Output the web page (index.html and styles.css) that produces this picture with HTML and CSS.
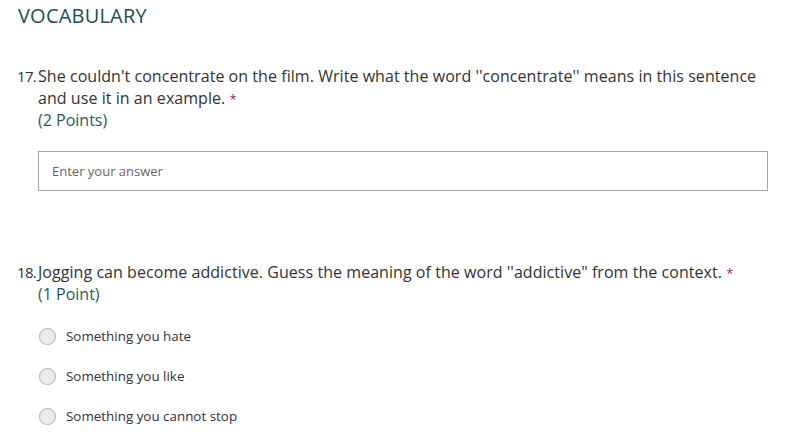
FILE: index.html
```html
<!DOCTYPE html>
<html>
<head>
<meta charset="utf-8">
<link rel="stylesheet" href="styles.css">
</head>
<body>
<div class="page">
  <h1 class="section-title">VOCABULARY</h1>

  <div class="question q17">
    <div class="qnum">17.</div>
    <div class="qbody">
      <div class="qtext">She couldn't concentrate on the film. Write what the word ''concentrate'' means in this sentence and use it in an example. <span class="req">*</span></div>
      <div class="points">(2 Points)</div>
      <div class="answer">Enter your answer</div>
    </div>
  </div>

  <div class="question q18">
    <div class="qnum">18.</div>
    <div class="qbody">
      <div class="qtext">Jogging can become addictive. Guess the meaning of the word ''addictive" from the context. <span class="req">*</span></div>
      <div class="points">(1 Point)</div>
      <div class="options">
        <div class="option"><span class="radio"></span><span class="label">Something you hate</span></div>
        <div class="option"><span class="radio"></span><span class="label">Something you like</span></div>
        <div class="option"><span class="radio"></span><span class="label">Something you cannot stop</span></div>
      </div>
    </div>
  </div>
</div>
</body>
</html>
```

FILE: styles.css
```css
html, body {
  margin: 0;
  padding: 0;
  background: #ffffff;
}
body {
  font-family: "Open Sans", "Noto Sans", "Liberation Sans", sans-serif;
  color: #333333;
}
.page {
  padding: 2px 22px 0 17px;
}
.section-title {
  margin: 0 0 0 1px;
  font-size: 20px;
  font-weight: 400;
  line-height: 28px;
  color: #1f4f4f;
  letter-spacing: 0.2px;
}
.question {
  display: flex;
}
.q17 {
  margin-top: 35px;
}
.q18 {
  margin-top: 70px;
}
.qnum {
  width: 21px;
  flex: none;
  font-size: 15px;
  line-height: 22px;
  letter-spacing: -0.7px;
}
.qbody {
  flex: 1;
}
.qtext {
  font-size: 16px;
  line-height: 22px;
  letter-spacing: 0.05px;
}
.req {
  color: #a4262c;
  font-size: 13px;
  line-height: 13px;
}
.points {
  font-size: 16px;
  line-height: 22px;
  color: #2b5b5b;
}
.answer {
  margin-top: 20px;
  height: 38px;
  border: 1px solid #a6a6a6;
  box-sizing: content-box;
  padding: 0 13px;
  font-size: 13px;
  line-height: 38px;
  color: #666666;
}
.options {
  margin-top: 21px;
  display: flex;
  flex-direction: column;
  gap: 20px;
}
.option {
  display: flex;
  align-items: center;
  height: 20px;
}
.radio {
  width: 15px;
  height: 15px;
  border: 1px solid #b0b0b0;
  border-radius: 50%;
  background: #ececec;
  margin-left: 1px;
  margin-right: 10px;
  flex: none;
}
.label {
  font-size: 13.4px;
  color: #333333;
}
```
